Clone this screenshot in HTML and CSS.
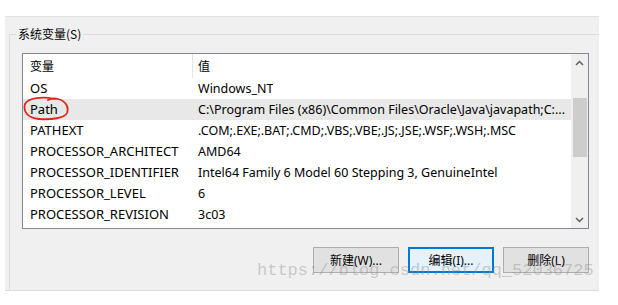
FILE: index.html
```html
<!DOCTYPE html>
<html lang="zh-CN">
<head>
    <meta charset="UTF-8">
    <title>系统变量</title>
    <link rel="stylesheet" href="styles.css">
</head>
<body>
    <div class="panel">
        <fieldset class="group">
            <legend>系统变量(S)</legend>

            <div class="listbox">
                <div class="grid">
                    <div class="row head">
                        <div class="col name">变量</div>
                        <div class="col value">值</div>
                    </div>
                    <div class="row">
                        <div class="col name">OS</div>
                        <div class="col value">Windows_NT</div>
                    </div>
                    <div class="row hover">
                        <div class="col name">
                            Path
                            <!-- red pen mark from the screenshot -->
                            <svg class="mark" width="48" height="26" viewBox="0 0 48 26">
                                <path d="M31 3 C20 0 5 2 2 8 C0 15 4 22 16 23 C28 24 42 22 44 17 C46 11 43 5 35 3 C31 2 27 3 25 4"
                                      fill="none" stroke="#e2231a" stroke-width="1.8" stroke-linecap="round"/>
                            </svg>
                        </div>
                        <div class="col value">C:\Program Files (x86)\Common Files\Oracle\Java\javapath;C:...</div>
                    </div>
                    <div class="row">
                        <div class="col name">PATHEXT</div>
                        <div class="col value">.COM;.EXE;.BAT;.CMD;.VBS;.VBE;.JS;.JSE;.WSF;.WSH;.MSC</div>
                    </div>
                    <div class="row">
                        <div class="col name">PROCESSOR_ARCHITECT</div>
                        <div class="col value">AMD64</div>
                    </div>
                    <div class="row">
                        <div class="col name">PROCESSOR_IDENTIFIER</div>
                        <div class="col value">Intel64 Family 6 Model 60 Stepping 3, GenuineIntel</div>
                    </div>
                    <div class="row">
                        <div class="col name">PROCESSOR_LEVEL</div>
                        <div class="col value">6</div>
                    </div>
                    <div class="row">
                        <div class="col name">PROCESSOR_REVISION</div>
                        <div class="col value">3c03</div>
                    </div>
                </div>

                <div class="scrollbar">
                    <div class="arrow">
                        <svg width="9" height="6" viewBox="0 0 9 6"><path d="M1 5 L4.5 1.5 L8 5" fill="none" stroke="#606060" stroke-width="1.5"/></svg>
                    </div>
                    <div class="track">
                        <div class="thumb"></div>
                    </div>
                    <div class="arrow">
                        <svg width="9" height="6" viewBox="0 0 9 6"><path d="M1 1 L4.5 4.5 L8 1" fill="none" stroke="#606060" stroke-width="1.5"/></svg>
                    </div>
                </div>
            </div>

            <div class="buttons">
                <button class="btn">新建(W)...</button>
                <button class="btn focused">编辑(I)...</button>
                <button class="btn">删除(L)</button>
                <span class="watermark">https://blog.csdn.net/qq_52036725</span>
            </div>
        </fieldset>
    </div>
</body>
</html>
```

FILE: styles.css
```css
/* Page */
body {
    margin: 0;
    background-color: #fff;
    font-family: "Noto Sans", "Noto Sans CJK SC", sans-serif;
    font-size: 12.5px;
    color: #000;
}

/* Dialog surface */
.panel {
    margin: 16px 19px 0 5px;
    height: 273px;
    background-color: #f0f0f0;
    border-top: 1px solid #e2e2e2;
    border-bottom: 1px solid #dadada;
    padding-left: 4px;
}

/* Group box */
.group {
    margin: 9px 0 0 0;
    padding: 0 0 17px 12px;
    border: 1px solid #dcdcdc;
    border-right: none;
    min-width: 0;
}

.group legend {
    padding: 0 2px;
    margin-left: -6px;
    line-height: 16px;
    font-size: 12px;
    font-family: "Noto Sans CJK SC", sans-serif;
}

/* List view */
.listbox {
    margin-top: 11px;
    width: 565px;
    height: 174px;
    border: 1px solid #828790;
    background-color: #fff;
    display: flex;
}

.grid {
    flex: 1;
    min-width: 0;
}

.row {
    display: flex;
    height: 21px;
    line-height: 21px;
    white-space: nowrap;
}

.row.head {
    height: 24px;
    line-height: 24px;
}

.row.hover {
    background-color: #e8e8e8;
}

.col.name {
    position: relative;
    width: 162px;
    padding-left: 7px;
    font-size: 13px;
}

.col.value {
    padding-left: 5px;
    overflow: hidden;
}

.row.head .col {
    font-size: 12px;
    font-family: "Noto Sans CJK SC", sans-serif;
}

.row.head .col.value {
    border-left: 1px solid #e5e5e5;
}

.row:not(.head) .col.value {
    margin-left: 1px;
}

.mark {
    position: absolute;
    left: 0;
    top: -3px;
}

/* Scrollbar */
.scrollbar {
    width: 17px;
    background-color: #f0f0f0;
    display: flex;
    flex-direction: column;
}

.arrow {
    height: 17px;
    display: flex;
    align-items: center;
    justify-content: center;
}

.track {
    flex: 1;
    padding: 27px 1px 0 2px;
}

.thumb {
    height: 59px;
    background-color: #cdcdcd;
}

/* Buttons */
.buttons {
    position: relative;
    margin-top: 18px;
    width: 567px;
    display: flex;
    justify-content: flex-end;
    gap: 9px;
}

.btn {
    width: 86px;
    height: 26px;
    padding: 0;
    background-color: #e1e1e1;
    border: 1px solid #adadad;
    font-family: "Noto Sans", "Noto Sans CJK SC", sans-serif;
    font-size: 12px;
    color: #000;
}

.btn.focused {
    border: 2px solid #0078d7;
    background-color: #e5f1fb;
}

.watermark {
    position: absolute;
    left: 235px;
    top: 14px;
    font-family: "Liberation Mono", monospace;
    font-size: 17px;
    color: rgba(150, 150, 150, 0.45);
    white-space: nowrap;
    pointer-events: none;
}
```
